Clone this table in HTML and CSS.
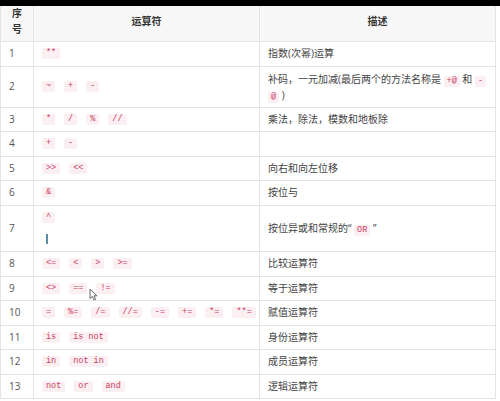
FILE: index.html
```html
<!DOCTYPE html>
<html lang="zh">
<head>
<meta charset="utf-8">
<link rel="stylesheet" href="styles.css">
</head>
<body>
<div class="topbar"></div>
<table class="ops">
  <colgroup><col class="c1"><col class="c2"><col class="c3"></colgroup>
  <thead>
    <tr><th>序号</th><th>运算符</th><th>描述</th></tr>
  </thead>
  <tbody>
    <tr><td>1</td><td><div class="chips"><code>**</code></div></td><td>指数(次幂)运算</td></tr>
    <tr><td>2</td><td><div class="chips"><code>~</code><code>+</code><code>-</code></div></td><td class="desc">补码，一元加减(最后两个的方法名称是 <code>+@</code> 和 <code>-</code><wbr><code>@</code> )</td></tr>
    <tr><td>3</td><td><div class="chips"><code>*</code><code>/</code><code>%</code><code>//</code></div></td><td>乘法，除法，模数和地板除</td></tr>
    <tr><td>4</td><td><div class="chips"><code>+</code><code>-</code></div></td><td></td></tr>
    <tr><td>5</td><td><div class="chips"><code>&gt;&gt;</code><code>&lt;&lt;</code></div></td><td>向右和向左位移</td></tr>
    <tr><td>6</td><td><div class="chips"><code>&amp;</code></div></td><td>按位与</td></tr>
    <tr><td>7</td><td><div class="chips"><code>^</code></div><div class="caret-line"><span class="caret"></span></div></td><td class="desc">按位异或和常规的“ <code>OR</code> ”</td></tr>
    <tr><td>8</td><td><div class="chips"><code>&lt;=</code><code>&lt;</code><code>&gt;</code><code>&gt;=</code></div></td><td>比较运算符</td></tr>
    <tr><td>9</td><td><div class="chips"><code>&lt;&gt;</code><code>==</code><code>!=</code></div></td><td>等于运算符</td></tr>
    <tr><td>10</td><td><div class="chips"><code>=</code><code>%=</code><code>/=</code><code>//=</code><code>-=</code><code>+=</code><code>*=</code><code>**=</code></div></td><td>赋值运算符</td></tr>
    <tr><td>11</td><td><div class="chips"><code>is</code><code>is not</code></div></td><td>身份运算符</td></tr>
    <tr><td>12</td><td><div class="chips"><code>in</code><code>not in</code></div></td><td>成员运算符</td></tr>
    <tr><td>13</td><td><div class="chips"><code>not</code><code>or</code><code>and</code></div></td><td>逻辑运算符</td></tr>
  </tbody>
</table>
<svg class="pointer" width="9" height="13" viewBox="0 0 9 13"><path d="M1 1 L1 10.5 L3.3 8.4 L5 12 L6.6 11.3 L5 7.8 L8 7.8 Z" fill="#fff" stroke="#666" stroke-width="1" stroke-linejoin="round"/></svg>
</body>
</html>
```
FILE: styles.css
```css
body {
  margin: 0;
  background: #fff;
  font-family: "Open Sans", "Noto Sans CJK SC", sans-serif;
  font-size: 10px;
  color: #444;
  position: relative;
  width: 500px;
  height: 401px;
  overflow: hidden;
}
.topbar {
  position: absolute;
  top: 0;
  left: 0;
  right: 0;
  height: 6px;
  background: #000;
}
.ops {
  border-collapse: collapse;
  table-layout: fixed;
  width: 495px;
}
.c1 { width: 33px; }
.c2 { width: 226px; }
.c3 { width: 236px; }
.ops th, .ops td {
  border: 1px solid #e4e4e4;
  padding: 4px 8px;
  line-height: 15.5px;
  text-align: left;
  vertical-align: middle;
}
.ops th {
  background: #f7f7f7;
  font-weight: bold;
  text-align: center;
  color: #333;
  line-height: 16px;
}
.ops td:first-child { color: #555; }
.ops td.desc {
  line-height: 16px;
  padding-right: 4px;
}
.chips {
  display: flex;
  gap: 9px;
  white-space: nowrap;
  height: 15.5px;
  align-items: center;
}
code {
  font-family: "Liberation Mono", "DejaVu Sans Mono", monospace;
  font-size: 8.5px;
  color: #cc3c5e;
  background: #fbeff2;
  padding: 0 4px;
  border-radius: 2px;
  line-height: 11px;
  display: inline-block;
  white-space: pre;
}
.desc code {
  padding: 0 3px;
}
.caret-line {
  height: 16px;
  margin-top: 6px;
  display: flex;
  align-items: center;
  padding-left: 4px;
}
.caret {
  display: inline-block;
  width: 1.5px;
  height: 10px;
  background: #5a8ca8;
}
.pointer {
  position: absolute;
  left: 89px;
  top: 288px;
}
```
